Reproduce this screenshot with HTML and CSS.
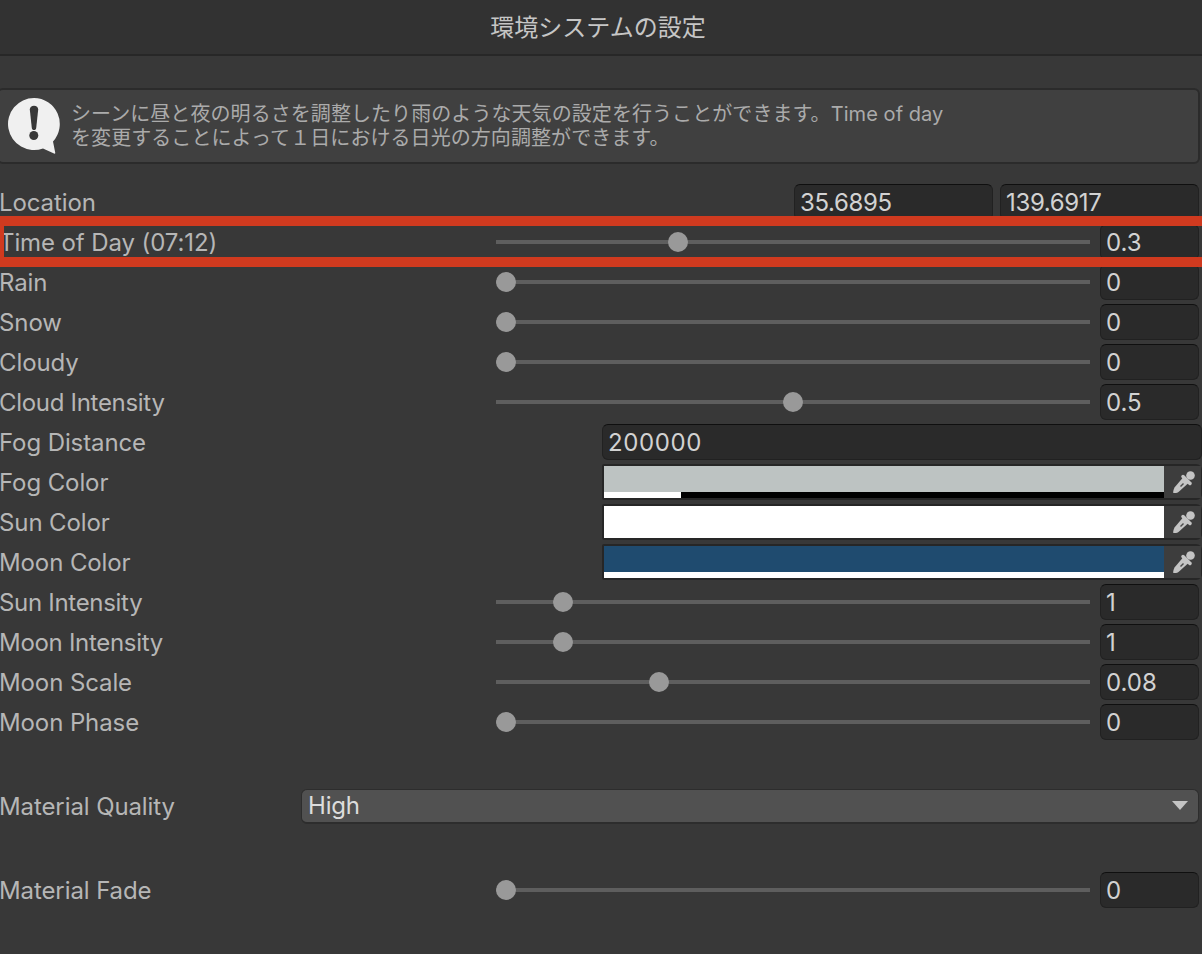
FILE: index.html
```html
<!DOCTYPE html>
<html lang="ja">
<head>
<meta charset="utf-8">
<title>環境システムの設定</title>
<link rel="stylesheet" href="styles.css">
</head>
<body>
<header class="title">環境システムの設定</header>
<div class="help">
  <svg class="help-icon" width="52" height="56" viewBox="0 0 52 56">
    <path class="bubble" d="M26 0A26 26 0 1 0 35 50.400L46 55.500Q47.500 56 47.200 54.500L45 43.500A26 26 0 0 0 26 0z"/>
    <path class="mark" d="M21.800 11.500c0-2.300 1.800-3.800 4.200-3.800s4.200 1.500 4.200 3.800L28.200 30c-.2 1.400-1 2-2.200 2s-2-.6-2.200-2z"/>
    <circle class="mark" cx="25.800" cy="37.500" r="4.500"/>
  </svg>
  <p class="help-text">シーンに昼と夜の明るさを調整したり雨のような天気の設定を行うことができます。Time of day<br>を変更することによって１日における日光の方向調整ができます。</p>
</div>
<main class="rows">
  <div class="row location">
    <span class="label">Location</span>
    <span class="field wide">35.6895</span>
    <span class="field wide">139.6917</span>
  </div>
  <div class="row">
    <span class="label">Time of Day (07:12)</span>
    <div class="slider"><i class="thumb" style="left:172px"></i></div>
    <span class="field">0.3</span>
  </div>
  <div class="row">
    <span class="label">Rain</span>
    <div class="slider"><i class="thumb" style="left:0"></i></div>
    <span class="field">0</span>
  </div>
  <div class="row">
    <span class="label">Snow</span>
    <div class="slider"><i class="thumb" style="left:0"></i></div>
    <span class="field">0</span>
  </div>
  <div class="row">
    <span class="label">Cloudy</span>
    <div class="slider"><i class="thumb" style="left:0"></i></div>
    <span class="field">0</span>
  </div>
  <div class="row">
    <span class="label tight">Cloud Intensity</span>
    <div class="slider"><i class="thumb" style="left:287px"></i></div>
    <span class="field">0.5</span>
  </div>
  <div class="row">
    <span class="label label-color">Fog Distance</span>
    <span class="field fill">200000</span>
  </div>
  <div class="row">
    <span class="label label-color">Fog Color</span>
    <div class="color">
      <div class="swatch">
        <div class="swatch-main fog"></div>
        <div class="alpha"><div class="alpha-on" style="width:77px"></div></div>
      </div>
      <div class="picker"><svg class="dropper" width="22" height="22" viewBox="0 0 22 22"><use href="#dropper"/></svg></div>
    </div>
  </div>
  <div class="row">
    <span class="label label-color">Sun Color</span>
    <div class="color">
      <div class="swatch">
        <div class="swatch-main sun"></div>
        <div class="alpha"><div class="alpha-on" style="width:100%"></div></div>
      </div>
      <div class="picker"><svg class="dropper" width="22" height="22" viewBox="0 0 22 22"><use href="#dropper"/></svg></div>
    </div>
  </div>
  <div class="row">
    <span class="label label-color">Moon Color</span>
    <div class="color">
      <div class="swatch">
        <div class="swatch-main moon"></div>
        <div class="alpha"><div class="alpha-on" style="width:100%"></div></div>
      </div>
      <div class="picker"><svg class="dropper" width="22" height="22" viewBox="0 0 22 22"><use href="#dropper"/></svg></div>
    </div>
  </div>
  <div class="row">
    <span class="label tight">Sun Intensity</span>
    <div class="slider"><i class="thumb" style="left:57px"></i></div>
    <span class="field">1</span>
  </div>
  <div class="row">
    <span class="label tight">Moon Intensity</span>
    <div class="slider"><i class="thumb" style="left:57px"></i></div>
    <span class="field">1</span>
  </div>
  <div class="row">
    <span class="label">Moon Scale</span>
    <div class="slider"><i class="thumb" style="left:153px"></i></div>
    <span class="field">0.08</span>
  </div>
  <div class="row">
    <span class="label">Moon Phase</span>
    <div class="slider"><i class="thumb" style="left:0"></i></div>
    <span class="field">0</span>
  </div>
  <div class="row section">
    <span class="label label-drop">Material Quality</span>
    <div class="dropdown"><span>High</span><i class="arrow"></i></div>
  </div>
  <div class="row section">
    <span class="label">Material Fade</span>
    <div class="slider"><i class="thumb" style="left:0"></i></div>
    <span class="field">0</span>
  </div>
</main>
<div class="highlight"></div>
<svg class="defs" width="0" height="0">
  <defs>
    <g id="dropper">
      <circle class="dropper-fill" cx="17.500" cy="4.500" r="4.300"/>
      <path class="dropper-collar" d="M10 5.500L17 12.500"/>
      <path class="dropper-fill" d="M10 6.500L15.500 12L5.500 21C4 22 1.800 22.300 .3 22C0 20.500 .5 18.500 1.500 16.500z"/>
      <path class="dropper-cut" d="M7.500 15.500L10.500 12.500"/>
    </g>
  </defs>
</svg>
</body>
</html>
```
FILE: styles.css
```css
* { box-sizing: border-box; }
html, body { margin: 0; padding: 0; }
body {
  position: relative;
  width: 1202px;
  height: 954px;
  overflow: hidden;
  background: #383838;
  color: #b6b6b6;
  font-family: Inter, "Noto Sans CJK JP", sans-serif;
  font-size: 24px;
}
.title {
  height: 56px;
  padding: 0 6px 4px 0;
  display: flex;
  align-items: center;
  justify-content: center;
  background: #323232;
  border-bottom: 2px solid #272727;
  color: #c6c6c6;
  font-family: "Noto Sans CJK JP", sans-serif;
  font-size: 24px;
}
.help {
  display: flex;
  align-items: center;
  height: 76px;
  margin: 32px 2px 0 -3px;
  padding-left: 9px;
  background: #404040;
  border: 2px solid #2b2b2b;
  border-radius: 6px;
}
.help-icon { flex: none; }
.help-text {
  margin: 0 0 0 11px;
  color: #ababab;
  font-family: Inter, "Noto Sans CJK JP", sans-serif;
  font-size: 20px;
  line-height: 24px;
  letter-spacing: 0.07px;
}
.rows { margin-top: 18px; }
.row {
  display: flex;
  align-items: center;
  height: 40px;
  padding-right: 3px;
}
.section { margin-top: 44px; }
.label {
  flex: none;
  width: 496px;
  white-space: nowrap;
  text-indent: -1px;
  letter-spacing: -0.1px;
}
.tight { letter-spacing: -0.3px; }
.label-color { width: 602px; }
.label-drop { width: 301px; }
.location .label { width: 794px; }
.location .field + .field { margin-left: 7px; }
.slider {
  position: relative;
  flex: none;
  width: 594px;
  height: 4px;
  margin-right: 10px;
  background: #5e5e5e;
}
.thumb {
  position: absolute;
  top: -8px;
  width: 20px;
  height: 20px;
  border-radius: 50%;
  background: #999;
}
.field {
  flex: none;
  width: 99px;
  height: 36px;
  padding-left: 5px;
  line-height: 36px;
  background: #2a2a2a;
  border: 1px solid #212121;
  border-top-color: #0f0f0f;
  border-radius: 6px;
  color: #d2d2d2;
}
.wide { width: 199px; letter-spacing: -0.35px; }
.fill { width: 600px; margin-right: -2px; letter-spacing: 0.6px; }
.color {
  display: flex;
  flex: none;
  width: 600px;
  height: 36px;
  margin-right: -2px;
  border: 2px solid #262626;
  border-right-width: 1px;
  border-radius: 2px 6px 6px 2px;
}
.swatch {
  display: flex;
  flex-direction: column;
  width: 560px;
  flex: none;
}
.swatch-main { flex: 1; }
.fog { background: #bdc3c2; }
.sun { background: #fff; }
.moon { background: #1f4b6f; }
.alpha { height: 6px; background: #000; }
.alpha-on { height: 100%; background: #fff; }
.picker {
  flex: 1;
  display: flex;
  align-items: center;
  justify-content: center;
  padding-left: 2px;
  background: #3d3d3d;
}
.dropper-fill { fill: #c4c4c4; }
.dropper-collar { fill: none; stroke: #c4c4c4; stroke-width: 3.5; stroke-linecap: round; }
.dropper-cut { fill: none; stroke: #4a4a4a; stroke-width: 1.5; }
.dropdown {
  display: flex;
  align-items: center;
  justify-content: space-between;
  flex: none;
  width: 898px;
  height: 35px;
  padding: 0 10px 0 6px;
  background: #515151;
  border: 1px solid #2d2d2d;
  border-bottom-width: 2px;
  border-radius: 6px;
  color: #dcdcdc;
  letter-spacing: -0.2px;
}
.arrow {
  width: 0;
  height: 0;
  border-left: 8px solid transparent;
  border-right: 8px solid transparent;
  border-top: 9px solid #c4c4c4;
}
.highlight {
  position: absolute;
  left: 0;
  right: 0;
  top: 216px;
  height: 51px;
  border: 10px solid #d03a1f;
  border-left-width: 4px;
  border-right-width: 0;
}
.bubble { fill: #f0f0f0; }
.mark { fill: #383838; }
.defs { position: absolute; }
```
